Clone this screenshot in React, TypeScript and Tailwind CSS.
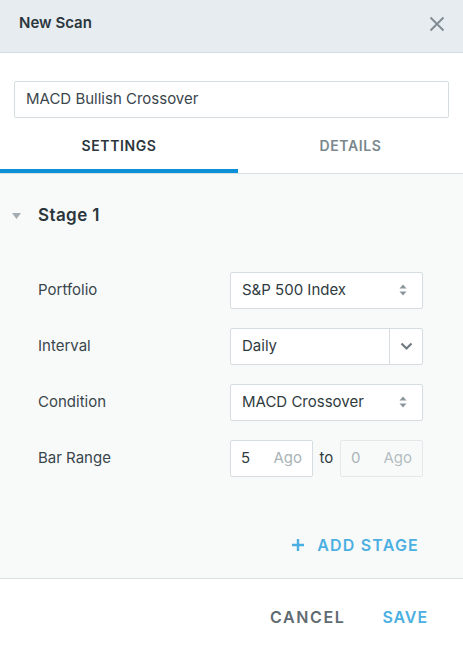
import React from "react";

const font = { fontFamily: '"Inter", "Open Sans", sans-serif' };

function UpDown() {
  return (
    <svg width="8" height="12" viewBox="0 0 8 12" className="text-[#8a969c]">
      <path d="M4 0.5 L7.5 4.5 L0.5 4.5 Z" fill="currentColor" />
      <path d="M4 11.5 L7.5 7.5 L0.5 7.5 Z" fill="currentColor" />
    </svg>
  );
}

function SelectBox({ value }: { value: string }) {
  return (
    <div className="flex h-[37px] w-[193px] items-center justify-between rounded-[2px] border border-[#d5dde1] bg-white pl-[11px] pr-[15px] text-[15px] text-[#2f3b41]">
      <span>{value}</span>
      <UpDown />
    </div>
  );
}

function Row({ label, children }: { label: string; children: React.ReactNode }) {
  return (
    <div className="flex items-center">
      <div className="w-[192px] text-[15px] text-[#3a464c]">{label}</div>
      {children}
    </div>
  );
}

export default function App() {
  return (
    <div className="flex h-[646px] w-[463px] flex-col bg-white" style={font}>
      {/* header */}
      <div className="flex h-[53px] items-center justify-between border-b border-[#d3dbe0] bg-[#e6ecf0] pb-[5px] pl-[19px] pr-[18px]">
        <h1 className="text-[15px] font-semibold text-[#2b363c]">New Scan</h1>
        <svg width="16" height="16" viewBox="0 0 16 16" className="text-[#7f8a90]">
          <path d="M1.5 1.5 L14.5 14.5 M14.5 1.5 L1.5 14.5" stroke="currentColor" strokeWidth="1.8" />
        </svg>
      </div>

      {/* name */}
      <div className="px-[14px] pt-[28px]">
        <div className="flex h-[37px] items-center rounded-[2px] border border-[#d5dde1] bg-white px-[11px] text-[15px] text-[#3a464c]">
          MACD Bullish Crossover
        </div>
      </div>

      {/* tabs */}
      <div className="flex border-b border-[#d9e0e4]">
        <div className="flex h-[55px] w-[238px] items-center justify-center border-b-[4px] border-[#0b8fd6] pt-[3px] text-[14px] font-semibold tracking-[0.6px] text-[#2b363c]">
          SETTINGS
        </div>
        <div className="flex h-[55px] flex-1 items-center justify-center pb-[1px] text-[14px] font-semibold tracking-[0.6px] text-[#7a878d]">
          DETAILS
        </div>
      </div>

      {/* body */}
      <div className="flex flex-1 flex-col border-b border-[#d9dee1] bg-[#f8fafa]">
        <div className="flex items-center pl-[12px] pt-[29px]">
          <svg width="9" height="6" viewBox="0 0 9 6" className="text-[#a3adb2]">
            <path d="M0 0 L9 0 L4.5 6 Z" fill="currentColor" />
          </svg>
          <span className="ml-[17px] text-[17px] font-semibold tracking-[0.4px] text-[#2b363c]">Stage 1</span>
        </div>

        <div className="mt-[43px] flex flex-col gap-[19px] pl-[38px]">
          <Row label="Portfolio">
            <SelectBox value="S&P 500 Index" />
          </Row>
          <Row label="Interval">
            <div className="flex h-[37px] w-[193px] items-center rounded-[2px] border border-[#d5dde1] bg-white text-[15px] text-[#2f3b41]">
              <span className="flex-1 pl-[11px]">Daily</span>
              <div className="flex h-full w-[33px] items-center justify-center border-l border-[#d5dde1]">
                <svg width="13" height="9" viewBox="0 0 13 9" className="text-[#6f7b81]">
                  <path d="M1.5 1.5 L6.5 6.5 L11.5 1.5" stroke="currentColor" strokeWidth="2.2" fill="none" />
                </svg>
              </div>
            </div>
          </Row>
          <Row label="Condition">
            <SelectBox value="MACD Crossover" />
          </Row>
          <Row label="Bar Range">
            <div className="flex items-center">
              <div className="flex h-[37px] w-[83px] items-center justify-between rounded-[2px] border border-[#d5dde1] bg-white px-[10px] text-[15px]">
                <span className="text-[#2f3b41]">5</span>
                <span className="text-[#a9b3b8]">Ago</span>
              </div>
              <span className="w-[27px] text-center text-[15px] text-[#2f3b41]">to</span>
              <div className="flex h-[37px] w-[83px] items-center justify-between rounded-[2px] border border-[#e3e8eb] bg-[#f8fafa] px-[10px] text-[15px]">
                <span className="text-[#a9b3b8]">0</span>
                <span className="text-[#b4bdc1]">Ago</span>
              </div>
            </div>
          </Row>
        </div>

        <div className="mt-auto mb-[21px] flex justify-end pr-[44px]">
          <button className="flex items-center gap-[13px] text-[16px] font-semibold tracking-[1.2px] text-[#4bb0e1]">
            <svg width="12" height="12" viewBox="0 0 12 12">
              <path d="M6 0 V12 M0 6 H12" stroke="currentColor" strokeWidth="2.4" />
            </svg>
            ADD STAGE
          </button>
        </div>
      </div>

      {/* footer */}
      <div className="flex h-[67px] items-center justify-end gap-[37px] pr-[35px] pt-[9px]">
        <button className="text-[16px] font-semibold tracking-[1.6px] text-[#5f6b71]">CANCEL</button>
        <button className="text-[16px] font-semibold tracking-[0.9px] text-[#4bb0e1]">SAVE</button>
      </div>
    </div>
  );
}
